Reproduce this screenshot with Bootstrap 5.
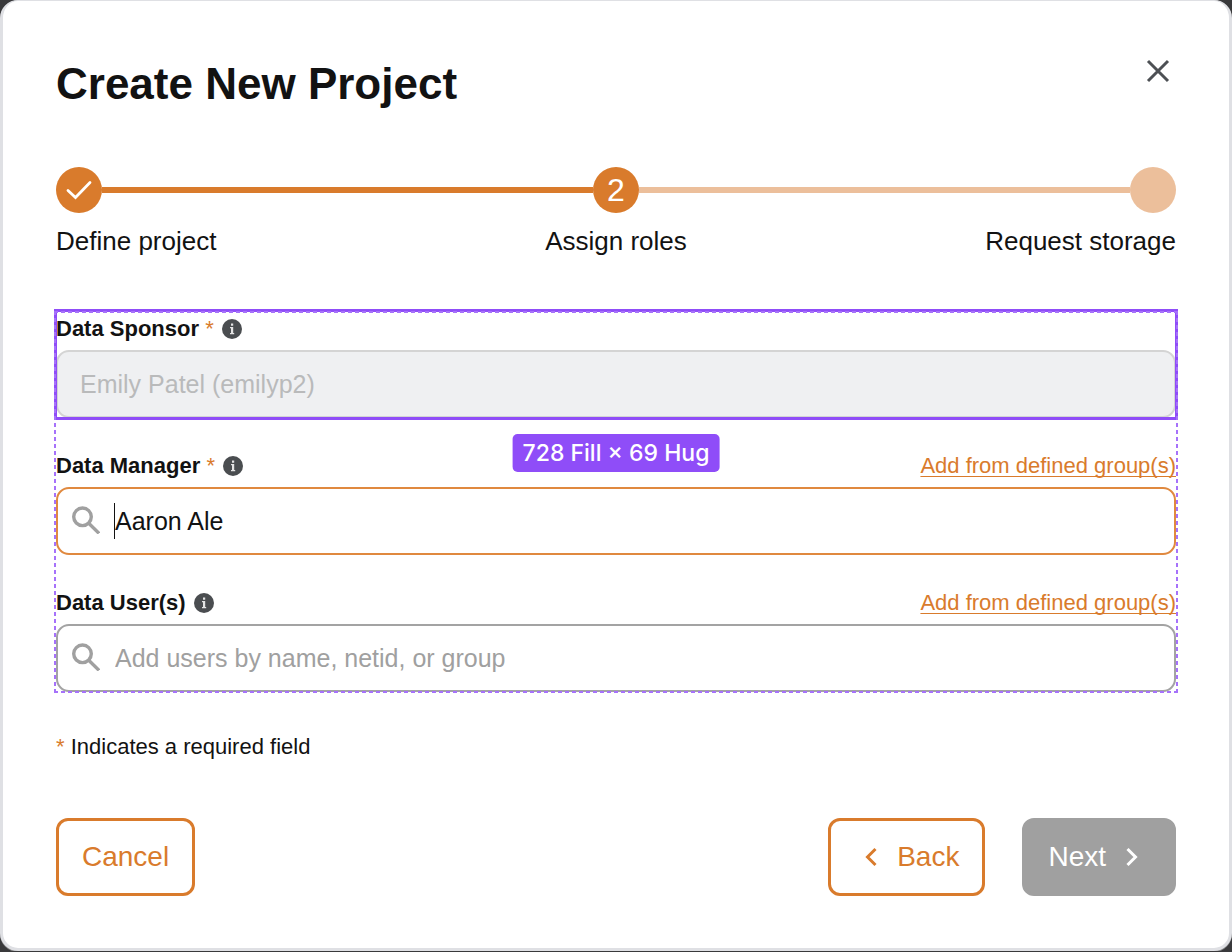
<!DOCTYPE html>
<html lang="en">
<head>
<meta charset="utf-8">
<meta name="viewport" content="width=device-width, initial-scale=1">
<title>Create New Project</title>
<link rel="stylesheet" href="https://cdn.jsdelivr.net/npm/bootstrap@5.3.0/dist/css/bootstrap.min.css">
<style>
  :root { --brand: #d97b2c; --brand-soft: #ecbf9b; --select: #8f4df8; --ink: #121212; }
  body { background: #39393b; color: var(--ink); font-family: "Liberation Sans", Arial, sans-serif; font-size: 26px; line-height: 32px; }
  .dialog-panel { min-height: calc(100vh - 1px); padding: 57px 53px 52px; border: 3px solid #dfe0e4; border-top-width: 1px; border-radius: 18px; box-shadow: 0 1px #808082; }
  h1 { font-size: 44px; line-height: 52px; font-weight: 700; }
  .close-btn { width: 36px; height: 36px; margin-top: -5px; color: #4d5054; }
  .stepper { margin-top: 57px; }
  .step-dot { width: 46px; height: 46px; background: var(--brand); color: #fff; font-size: 32px; }
  .step-line { height: 6px; background: var(--brand); }
  .step-todo { background: var(--brand-soft); }
  .step-names { margin-top: 12px; }
  .roles { margin-top: 54px; gap: 30px; }
  /* dotted bounds of the whole group */
  .roles::after { content: ""; position: absolute; inset: 0 -2px -1px; pointer-events: none;
    background:
      repeating-linear-gradient(90deg, #a672fa 0 4px, transparent 4px 7px) 0 0 / 100% 2px no-repeat,
      repeating-linear-gradient(90deg, #a672fa 0 4px, transparent 4px 7px) 0 100% / 100% 2px no-repeat,
      repeating-linear-gradient(#a672fa 0 4px, transparent 4px 7px) 0 0 / 2px 100% no-repeat,
      repeating-linear-gradient(#a672fa 0 4px, transparent 4px 7px) 100% 0 / 2px 100% no-repeat; }
  .selected { outline: 3px solid var(--select); outline-offset: -1px; }
  .field-head { font-size: 22px; line-height: 35px; margin-bottom: 4px; }
  .field-head label { font-weight: 700; }
  .star { color: var(--brand); font-weight: 400; }
  .info { width: 20px; height: 20px; }
  .group-link, .group-link:hover { color: var(--brand); text-decoration-thickness: 1px; text-underline-offset: 3px; text-decoration-skip-ink: none; }
  .form-control { height: 68px; border: 2px solid #a3a3a3; border-radius: 13px; font-size: 25px; line-height: 32px; color: var(--ink); padding: 0 22px; }
  .form-control:disabled { background: #eff0f2; border-color: #d4d4d4; color: #b9babb; opacity: 1; }
  .form-control::placeholder { color: #a0a0a0; }
  .with-icon { padding-left: 57px; }
  .active-field { border-color: #e0893f; }
  .lens { left: 16px; top: 19px; width: 28px; height: 28px; color: #a0a0a0; }
  .caret { left: 58px; top: 16px; width: 1px; height: 36px; background: var(--ink); }
  .size-tag { top: 123px; left: 50%; transform: translateX(-50%); z-index: 2; padding: 0 10px; height: 38px; line-height: 39px; border-radius: 5px; background: var(--select); color: #fff; font-family: Inter, sans-serif; font-size: 23px; font-weight: 500; }
  .required-note { margin-top: 39px; font-size: 22px; }
  .actions { margin-top: 55px; gap: 37px; }
  .actions .btn { height: 78px; border: 3px solid var(--brand); border-radius: 12px; font-size: 28px; line-height: 32px; color: var(--brand); background: #fff; padding: 0 23px; }
  .actions .btn-back { gap: 20px; padding-left: 34px; }
  .actions .btn-next { gap: 20px; padding-right: 35px; background: #a0a0a0; border-color: #a0a0a0; color: #fff; opacity: 1; }
  .chevron { width: 12px; height: 20px; }
</style>
</head>
<body>
<main class="dialog-panel bg-white" role="dialog" aria-labelledby="dialogTitle">
  <header class="d-flex justify-content-between align-items-start">
    <h1 id="dialogTitle" class="mb-0">Create New Project</h1>
    <button type="button" class="close-btn btn p-0 border-0 d-flex align-items-center justify-content-center" aria-label="Close">
      <svg width="36" height="36" viewBox="0 0 36 36" fill="none" stroke="currentColor" stroke-width="3"><path d="M8 8 28 28M28 8 8 28"/></svg>
    </button>
  </header>

  <div class="stepper d-flex align-items-center">
    <span class="step-dot rounded-circle d-flex align-items-center justify-content-center flex-shrink-0">
      <svg width="46" height="46" viewBox="0 0 46 46" fill="none" stroke="#fff" stroke-width="2.8" stroke-linecap="round"><path d="M12 23.500 19.500 30.500 34 15.500"/></svg>
    </span>
    <span class="step-line flex-fill"></span>
    <span class="step-dot rounded-circle d-flex align-items-center justify-content-center flex-shrink-0">2</span>
    <span class="step-line step-todo flex-fill"></span>
    <span class="step-dot step-todo rounded-circle flex-shrink-0"></span>
  </div>
  <div class="step-names row">
    <div class="col">Define project</div>
    <div class="col text-center">Assign roles</div>
    <div class="col text-end">Request storage</div>
  </div>

  <form>
    <div class="roles position-relative d-flex flex-column">
      <div class="selected">
        <div class="field-head d-flex align-items-center">
          <label for="sponsor">Data Sponsor <span class="star">*</span></label>
          <svg class="info ms-2" viewBox="0 0 20 20"><circle cx="10" cy="10" r="10" fill="#4a4d50"/><path d="M9 4.500h2.200v2.200H9zM8 8h3.200v6h1v1.300H8V14h1V9.300H8z" fill="#e4e4e4"/></svg>
        </div>
        <input id="sponsor" class="form-control" type="text" value="Emily Patel (emilyp2)" disabled>
      </div>
      <span class="size-tag position-absolute text-nowrap">728 Fill × 69 Hug</span>
      <div>
        <div class="field-head d-flex align-items-center">
          <label for="manager">Data Manager <span class="star">*</span></label>
          <svg class="info ms-2" viewBox="0 0 20 20"><circle cx="10" cy="10" r="10" fill="#4a4d50"/><path d="M9 4.500h2.200v2.200H9zM8 8h3.200v6h1v1.300H8V14h1V9.300H8z" fill="#e4e4e4"/></svg>
          <a href="#" class="group-link ms-auto">Add from defined group(s)</a>
        </div>
        <div class="position-relative">
          <input id="manager" class="form-control with-icon active-field" type="text" value="Aaron Ale">
          <svg class="lens position-absolute" viewBox="0 0 28 28" fill="none" stroke="currentColor" stroke-width="3.4"><circle cx="10.500" cy="10.800" r="8.800"/><path d="M17 17.500 27 27.300"/></svg>
          <span class="caret position-absolute"></span>
        </div>
      </div>
      <div>
        <div class="field-head d-flex align-items-center">
          <label for="users">Data User(s)</label>
          <svg class="info ms-2" viewBox="0 0 20 20"><circle cx="10" cy="10" r="10" fill="#4a4d50"/><path d="M9 4.500h2.200v2.200H9zM8 8h3.200v6h1v1.300H8V14h1V9.300H8z" fill="#e4e4e4"/></svg>
          <a href="#" class="group-link ms-auto">Add from defined group(s)</a>
        </div>
        <div class="position-relative">
          <input id="users" class="form-control with-icon" type="text" placeholder="Add users by name, netid, or group">
          <svg class="lens position-absolute" viewBox="0 0 28 28" fill="none" stroke="currentColor" stroke-width="3.4"><circle cx="10.500" cy="10.800" r="8.800"/><path d="M17 17.500 27 27.300"/></svg>
        </div>
      </div>
    </div>

    <p class="required-note mb-0"><span class="star">*</span> Indicates a required field</p>

    <div class="actions d-flex">
      <button type="button" class="btn">Cancel</button>
      <button type="button" class="btn btn-back ms-auto d-flex align-items-center">
        <svg class="chevron" viewBox="0 0 12 20" fill="none" stroke="currentColor" stroke-width="3"><path d="M10.500 2 2.500 10 10.500 18"/></svg>Back
      </button>
      <button type="button" class="btn btn-next d-flex align-items-center" disabled>
        Next<svg class="chevron" viewBox="0 0 12 20" fill="none" stroke="currentColor" stroke-width="3"><path d="M1.500 2 9.500 10 1.500 18"/></svg>
      </button>
    </div>
  </form>
</main>
<script src="https://cdn.jsdelivr.net/npm/bootstrap@5.3.0/dist/js/bootstrap.bundle.min.js"></script>
</body>
</html>
